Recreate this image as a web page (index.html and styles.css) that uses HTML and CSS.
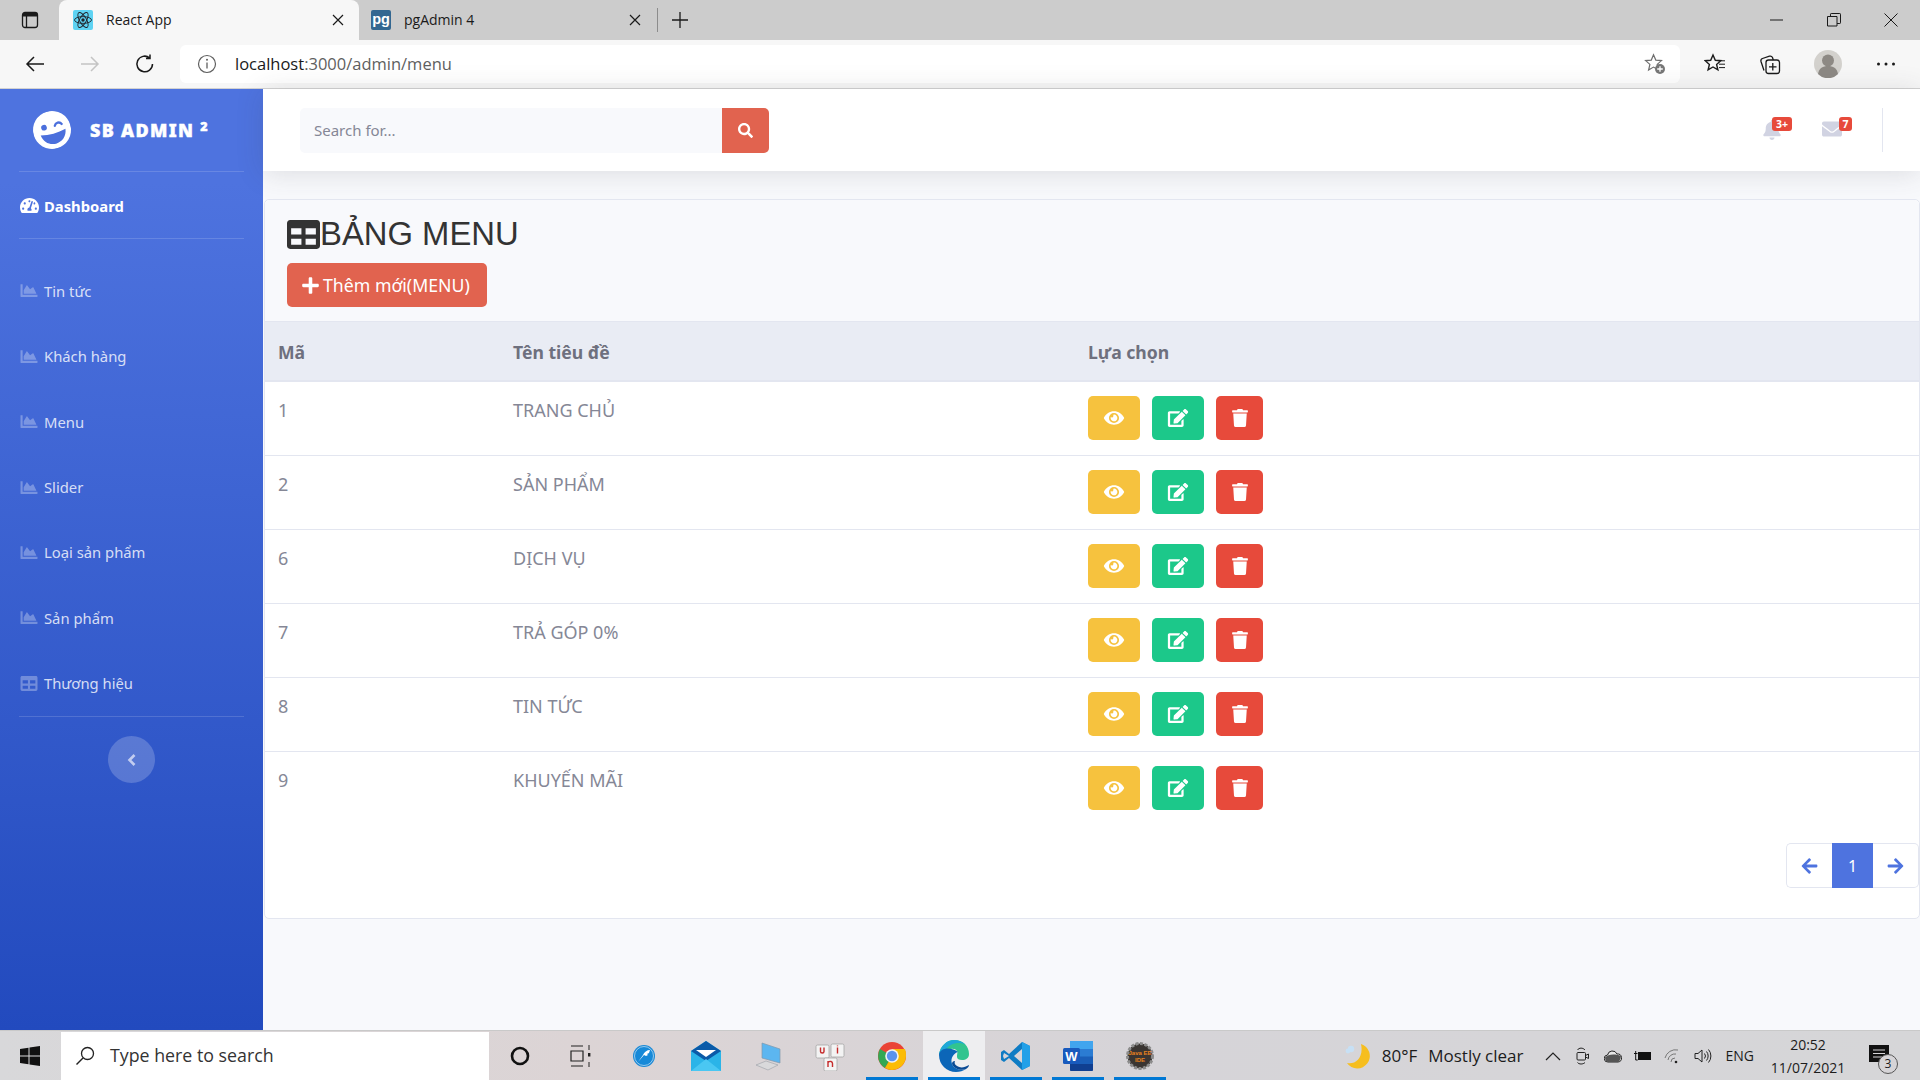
FILE: index.html
```html
<!DOCTYPE html>
<html lang="vi">
<head>
<meta charset="utf-8">
<title>React App</title>
<link rel="stylesheet" href="styles.css">
</head>
<body>
<svg class="sprite" xmlns="http://www.w3.org/2000/svg">
  <symbol id="i-area" viewBox="0 0 512 512"><path d="M500 384c6.6 0 12 5.4 12 12v40c0 6.600-5.400 12-12 12H12c-6.600 0-12-5.400-12-12V76c0-6.600 5.400-12 12-12h40c6.600 0 12 5.400 12 12v308h436zM372.700 159.500L288 216l-85.300-113.700c-5.100-6.800-15.500-6.300-19.900.9L96 248v104h384l-89.900-187.800c-3.200-6.500-11.400-8.700-17.400-4.700z"/></symbol>
  <symbol id="i-table" viewBox="0 0 512 512"><path d="M464 32H48C21.490 32 0 53.490 0 80v352c0 26.510 21.490 48 48 48h416c26.510 0 48-21.490 48-48V80c0-26.510-21.490-48-48-48zM224 416H64v-96h160v96zm0-160H64v-96h160v96zm224 160H288v-96h160v96zm0-160H288v-96h160v96z"/></symbol>
  <symbol id="i-eye" viewBox="0 0 576 512"><path d="M572.520 241.400C518.290 135.590 410.930 64 288 64S57.680 135.640 3.480 241.410a32.350 32.350 0 0 0 0 29.190C57.710 376.410 165.070 448 288 448s230.320-71.640 284.520-177.410a32.350 32.350 0 0 0 0-29.190zM288 400a144 144 0 1 1 144-144 143.930 143.930 0 0 1-144 144zm0-240a95.310 95.310 0 0 0-25.310 3.790 47.850 47.850 0 0 1-66.900 66.900A95.780 95.780 0 1 0 288 160z"/></symbol>
  <symbol id="i-edit" viewBox="0 0 576 512"><path d="M402.600 83.200l90.200 90.200c3.800 3.800 3.800 10 0 13.800L274.400 405.600l-92.800 10.300c-12.400 1.400-22.900-9.100-21.500-21.500l10.300-92.800L388.800 83.200c3.800-3.800 10-3.800 13.800 0zm162-22.900l-48.800-48.800c-15.200-15.200-39.900-15.200-55.200 0l-35.400 35.400c-3.800 3.800-3.800 10 0 13.800l90.200 90.200c3.800 3.800 10 3.800 13.800 0l35.400-35.400c15.200-15.300 15.200-40 0-55.200zM384 346.200V448H64V128h229.800c3.200 0 6.200-1.300 8.500-3.500l40-40c7.600-7.600 2.200-20.500-8.500-20.500H48C21.500 64 0 85.500 0 112v352c0 26.500 21.500 48 48 48h352c26.500 0 48-21.500 48-48V306.200c0-10.700-12.900-16-20.500-8.500l-40 40c-2.200 2.300-3.500 5.300-3.500 8.500z"/></symbol>
  <symbol id="i-trash" viewBox="0 0 448 512"><path d="M432 32H312l-9.400-18.700A24 24 0 0 0 281.100 0H166.800a23.720 23.720 0 0 0-21.400 13.300L136 32H16A16 16 0 0 0 0 48v32a16 16 0 0 0 16 16h416a16 16 0 0 0 16-16V48a16 16 0 0 0-16-16zM53.200 467a48 48 0 0 0 47.900 45h245.800a48 48 0 0 0 47.900-45L416 128H32z"/></symbol>
  <symbol id="i-search" viewBox="0 0 512 512"><path d="M505 442.700L405.300 343c-4.500-4.500-10.600-7-17-7H372c27.600-35.300 44-79.700 44-128C416 93.100 322.900 0 208 0S0 93.100 0 208s93.100 208 208 208c48.300 0 92.700-16.400 128-44v16.300c0 6.400 2.500 12.500 7 17l99.700 99.700c9.400 9.400 24.600 9.400 33.900 0l28.300-28.300c9.400-9.400 9.400-24.600.1-34zM208 336c-70.700 0-128-57.200-128-128 0-70.700 57.200-128 128-128 70.700 0 128 57.200 128 128 0 70.700-57.200 128-128 128z"/></symbol>
  <symbol id="i-plus" viewBox="0 0 448 512"><path d="M416 208H272V64c0-17.670-14.330-32-32-32h-32c-17.670 0-32 14.330-32 32v144H32c-17.670 0-32 14.330-32 32v32c0 17.670 14.330 32 32 32h144v144c0 17.670 14.330 32 32 32h32c17.670 0 32-14.330 32-32V304h144c17.670 0 32-14.330 32-32v-32c0-17.670-14.330-32-32-32z"/></symbol>
  <symbol id="i-left" viewBox="0 0 448 512"><path d="M257.500 445.100l-22.200 22.200c-9.400 9.400-24.600 9.400-33.900 0L7 273c-9.400-9.400-9.400-24.600 0-33.900L201.400 44.700c9.400-9.400 24.600-9.400 33.900 0l22.200 22.200c9.500 9.500 9.300 25-.4 34.300L136.600 216H424c13.300 0 24 10.700 24 24v32c0 13.300-10.700 24-24 24H136.600l120.500 114.800c9.800 9.300 10 24.800.4 34.300z"/></symbol>
  <symbol id="i-right" viewBox="0 0 448 512"><path d="M190.500 66.900l22.200-22.200c9.400-9.400 24.600-9.400 33.900 0L441 239c9.400 9.400 9.400 24.600 0 33.900L246.600 467.300c-9.400 9.400-24.600 9.400-33.900 0l-22.200-22.200c-9.500-9.500-9.300-25 .4-34.300L311.400 296H24c-13.300 0-24-10.700-24-24v-32c0-13.300 10.700-24 24-24h287.400L190.900 101.200c-9.800-9.300-10-24.800-.4-34.300z"/></symbol>
  <symbol id="i-bell" viewBox="0 0 448 512"><path d="M224 512c35.320 0 63.970-28.650 63.970-64H160.030c0 35.350 28.650 64 63.970 64zm215.390-149.710c-19.320-20.760-55.470-51.990-55.470-154.290 0-77.700-54.480-139.900-127.940-155.160V32c0-17.670-14.320-32-31.980-32s-31.980 14.330-31.980 32v20.840C118.560 68.100 64.080 130.300 64.080 208c0 102.300-36.150 133.530-55.470 154.290-6 6.450-8.660 14.160-8.610 21.710.11 16.400 12.980 32 32.100 32h383.800c19.120 0 32-15.600 32.100-32 .05-7.550-2.610-15.270-8.610-21.710z"/></symbol>
  <symbol id="i-mail" viewBox="0 0 512 512"><path d="M502.300 190.800c3.900-3.100 9.700-.2 9.700 4.700V400c0 26.500-21.500 48-48 48H48c-26.500 0-48-21.500-48-48V195.600c0-5 5.700-7.800 9.700-4.700 22.400 17.400 52.100 39.500 154.100 113.600 21.100 15.400 56.700 47.800 92.200 47.600 35.700.3 72-32.800 92.300-47.600 102-74.100 131.600-96.300 154-113.700zM256 320c23.200.4 56.600-29.200 73.400-41.400 132.700-96.300 142.800-104.700 173.400-128.700 5.800-4.500 9.200-11.500 9.200-18.900v-19c0-26.500-21.500-48-48-48H48C21.500 64 0 85.500 0 112v19c0 7.400 3.400 14.300 9.200 18.900 30.600 23.900 40.700 32.400 173.400 128.700 16.800 12.200 50.200 41.800 73.400 41.400z"/></symbol>
  <symbol id="i-gauge" viewBox="0 0 576 512"><path d="M288 32C128.940 32 0 160.940 0 320c0 52.800 14.250 102.260 39.060 144.800 5.610 9.620 16.300 15.200 27.440 15.200h443c11.140 0 21.830-5.580 27.440-15.200C561.750 422.260 576 372.800 576 320c0-159.060-128.940-288-288-288zm0 64c14.710 0 26.580 10.130 30.320 23.650-1.110 2.260-2.640 4.230-3.450 6.670l-9.220 27.670c-5.130 3.490-10.970 6.010-17.640 6.010-17.670 0-32-14.330-32-32S270.330 96 288 96zM96 384c-17.670 0-32-14.330-32-32s14.330-32 32-32 32 14.330 32 32-14.330 32-32 32zm48-160c-17.670 0-32-14.330-32-32s14.330-32 32-32 32 14.330 32 32-14.330 32-32 32zm246.770-72.410l-61.330 184C343.130 347.330 352 364.540 352 384c0 11.720-3.380 22.550-8.880 32H232.880c-5.500-9.450-8.880-20.280-8.880-32 0-33.940 26.500-61.430 59.900-63.590l61.340-184.010c4.170-12.560 17.730-19.450 30.360-15.170 12.570 4.190 19.350 17.790 15.170 30.360zm14.660 57.200l15.520-46.550c3.470-1.290 7.130-2.230 11.050-2.230 17.670 0 32 14.330 32 32s-14.330 32-32 32c-11.380-.01-20.890-6.280-26.570-15.220zM480 384c-17.670 0-32-14.330-32-32s14.330-32 32-32 32 14.330 32 32-14.330 32-32 32z"/></symbol>
</svg>

<div class="tabstrip">
  <div class="tab-actions">
    <svg class="ic20" viewBox="0 0 20 20"><rect x="2.500" y="2.500" width="15" height="15" rx="2.500" fill="none" stroke="#1a1a1a" stroke-width="1.300"/><path d="M3 3h14v3.500H3z" fill="#1a1a1a"/><path d="M6.500 6v11" stroke="#1a1a1a" stroke-width="1.300"/></svg>
  </div>
  <div class="tab tab-active">
    <svg class="favicon" viewBox="0 0 20 20"><rect width="20" height="20" rx="2" fill="#5ed3f3"/><g fill="none" stroke="#20232a" stroke-width=".9"><ellipse cx="10" cy="10" rx="8.500" ry="3.400"/><ellipse cx="10" cy="10" rx="8.500" ry="3.400" transform="rotate(60 10 10)"/><ellipse cx="10" cy="10" rx="8.500" ry="3.400" transform="rotate(120 10 10)"/></g><circle cx="10" cy="10" r="1.700" fill="#20232a"/></svg>
    <span class="tab-title">React App</span>
    <svg class="tab-x" viewBox="0 0 12 12"><path d="M1 1l10 10M11 1L1 11" stroke="#1a1a1a" stroke-width="1.200"/></svg>
  </div>
  <div class="tab tab-bg">
    <svg class="favicon" viewBox="0 0 20 20"><rect width="20" height="20" rx="2" fill="#336791"/><text x="10" y="13.500" class="pg-text">pg</text></svg>
    <span class="tab-title">pgAdmin 4</span>
    <svg class="tab-x" viewBox="0 0 12 12"><path d="M1 1l10 10M11 1L1 11" stroke="#1a1a1a" stroke-width="1.200"/></svg>
  </div>
  <span class="tab-sep"></span>
  <svg class="new-tab" viewBox="0 0 18 18"><path d="M9 1v16M1 9h16" stroke="#1a1a1a" stroke-width="1.300"/></svg>
  <div class="win-controls">
    <svg class="win-btn" viewBox="0 0 14 14"><path d="M0 7h13" stroke="#1a1a1a" stroke-width="1"/></svg>
    <svg class="win-btn" viewBox="0 0 14 14"><path d="M.5 3.500h9.500v9.500H.5zM3.500 3.500V1.200a.7.7 0 0 1 .7-.7h8.600a.7.7 0 0 1 .7.7v8.600a.7.7 0 0 1-.7.7H10" fill="none" stroke="#1a1a1a" stroke-width="1"/></svg>
    <svg class="win-btn" viewBox="0 0 14 14"><path d="M.5.500l13 13M13.500.500l-13 13" stroke="#1a1a1a" stroke-width="1"/></svg>
  </div>
</div>

<div class="toolbar">
  <div class="nav-btns">
    <svg class="ic22" viewBox="0 0 22 22"><path d="M20 11H3M10 4l-7 7 7 7" fill="none" stroke="#1a1a1a" stroke-width="1.500"/></svg>
    <svg class="ic22" viewBox="0 0 22 22"><path d="M2 11h17M12 4l7 7-7 7" fill="none" stroke="#c4c4c4" stroke-width="1.500"/></svg>
    <svg class="ic22" viewBox="0 0 22 22"><path d="M18.500 11a7.800 7.800 0 1 1-3-6.200M16 1.500v4h-4" fill="none" stroke="#1a1a1a" stroke-width="1.500"/></svg>
  </div>
  <div class="addressbar">
    <svg class="info" viewBox="0 0 20 20"><circle cx="10" cy="10" r="8.500" fill="none" stroke="#5f5f5f" stroke-width="1.200"/><path d="M10 8.500v6" stroke="#5f5f5f" stroke-width="1.300"/><circle cx="10" cy="5.800" r="1" fill="#5f5f5f"/></svg>
    <span class="url"><span class="url-host">localhost</span>:3000/admin/menu</span>
    <svg class="star-add" viewBox="0 0 22 22"><path d="M9.500 1.800l2.300 5.300 5.700.5-4.300 3.800 1.200 5.600-4.900-2.900-4.900 2.900 1.300-5.600-4.300-3.800 5.700-.5z" fill="none" stroke="#6f6f6f" stroke-width="1.200"/><circle cx="16" cy="16" r="5" fill="#777"/><path d="M16 13.200v5.600M13.200 16h5.600" stroke="#fff" stroke-width="1.300"/></svg>
  </div>
  <div class="tool-btns">
    <svg class="ic22" viewBox="0 0 22 22"><path d="M9 2l2.300 5.300 5.500.4-4.200 3.700 1.300 5.400L9 14l-4.900 2.800 1.300-5.400-4.200-3.700 5.500-.4z" fill="none" stroke="#1a1a1a" stroke-width="1.400"/><path d="M14.500 7.800H21M15 11.200h6M15 14.600h6" stroke="#1a1a1a" stroke-width="1"/></svg>
    <svg class="ic22" viewBox="0 0 22 22"><rect x="7" y="7" width="13.500" height="13.500" rx="2.500" fill="none" stroke="#1a1a1a" stroke-width="1.300"/><path d="M13.800 10v7.500M10 13.800h7.500" stroke="#1a1a1a" stroke-width="1.300"/><path d="M5 17.500L2 8.500a2.500 2.500 0 0 1 1.500-3l7-2.300a2.500 2.500 0 0 1 3 1.300l.8 2.500" fill="none" stroke="#1a1a1a" stroke-width="1.300"/></svg>
    <svg class="avatar" viewBox="0 0 28 28"><circle cx="14" cy="14" r="14" fill="#d3d1cd"/><circle cx="14" cy="10.500" r="6" fill="#8d8984"/><path d="M4 24c1-6 5-8 10-8s9 2 10 8a14 14 0 0 1-20 0z" fill="#8d8984"/></svg>
    <svg class="ic22" viewBox="0 0 22 22"><circle cx="3.500" cy="11" r="1.500" fill="#1a1a1a"/><circle cx="11" cy="11" r="1.500" fill="#1a1a1a"/><circle cx="18.500" cy="11" r="1.500" fill="#1a1a1a"/></svg>
  </div>
</div>

<div class="app">
  <aside class="sidebar">
    <div class="brand">
      <svg class="brand-logo" viewBox="0 0 40 40">
        <circle cx="20" cy="20" r="20" fill="#fff"/>
        <circle cx="12.500" cy="15.500" r="3" fill="#4b6fdc"/>
        <path d="M24 16.500c1.500-3.200 6-3.200 7.500 0" fill="none" stroke="#4b6fdc" stroke-width="2.400" stroke-linecap="round"/>
        <path d="M7 22.500c9 2.300 18 2.300 27 0-1 8-7 12.500-13.500 12.500S8 30.500 7 22.500z" fill="#4b6fdc"/>
      </svg>
      <span class="brand-text">SB ADMIN <sup class="brand-sup">2</sup></span>
    </div>
    <hr class="side-hr">
    <a class="nav-item nav-active"><svg class="nav-icon"><use href="#i-gauge"/></svg><span>Dashboard</span></a>
    <hr class="side-hr">
    <nav class="nav-list">
      <a class="nav-item"><svg class="nav-icon"><use href="#i-area"/></svg><span>Tin tức</span></a>
      <a class="nav-item"><svg class="nav-icon"><use href="#i-area"/></svg><span>Khách hàng</span></a>
      <a class="nav-item"><svg class="nav-icon"><use href="#i-area"/></svg><span>Menu</span></a>
      <a class="nav-item"><svg class="nav-icon"><use href="#i-area"/></svg><span>Slider</span></a>
      <a class="nav-item"><svg class="nav-icon"><use href="#i-area"/></svg><span>Loại sản phẩm</span></a>
      <a class="nav-item"><svg class="nav-icon"><use href="#i-area"/></svg><span>Sản phẩm</span></a>
      <a class="nav-item"><svg class="nav-icon"><use href="#i-table"/></svg><span>Thương hiệu</span></a>
    </nav>
    <hr class="side-hr">
    <div class="toggle"><svg class="toggle-ic" viewBox="0 0 10 14"><path d="M7.500 2L2.500 7l5 5" fill="none" stroke="#c3cdf0" stroke-width="2.600"/></svg></div>
  </aside>

  <main class="content">
    <header class="topbar">
      <form class="search">
        <span class="search-input">Search for...</span>
        <span class="search-btn"><svg class="search-ic"><use href="#i-search"/></svg></span>
      </form>
      <div class="top-right">
        <div class="alert alert-first"><svg class="alert-bell"><use href="#i-bell"/></svg><span class="badge badge-bell">3+</span></div>
        <div class="alert"><svg class="alert-mail"><use href="#i-mail"/></svg><span class="badge badge-mail">7</span></div>
        <span class="top-divider"></span>
      </div>
    </header>

    <section class="card">
      <div class="card-head">
        <h1 class="card-title"><svg class="title-ic"><use href="#i-table"/></svg>BẢNG MENU</h1>
        <a class="btn-add"><svg class="plus-ic"><use href="#i-plus"/></svg>Thêm mới(MENU)</a>
      </div>
      <table class="table">
        <thead>
          <tr><th class="col-id">Mã</th><th class="col-title">Tên tiêu đề</th><th>Lựa chọn</th></tr>
        </thead>
        <tbody>
          <tr><td>1</td><td>TRANG CHỦ</td><td><div class="actions"><a class="act act-view"><svg class="act-ic-w"><use href="#i-eye"/></svg></a><a class="act act-edit"><svg class="act-ic-w"><use href="#i-edit"/></svg></a><a class="act act-del"><svg class="act-ic"><use href="#i-trash"/></svg></a></div></td></tr>
          <tr><td>2</td><td>SẢN PHẨM</td><td><div class="actions"><a class="act act-view"><svg class="act-ic-w"><use href="#i-eye"/></svg></a><a class="act act-edit"><svg class="act-ic-w"><use href="#i-edit"/></svg></a><a class="act act-del"><svg class="act-ic"><use href="#i-trash"/></svg></a></div></td></tr>
          <tr><td>6</td><td>DỊCH VỤ</td><td><div class="actions"><a class="act act-view"><svg class="act-ic-w"><use href="#i-eye"/></svg></a><a class="act act-edit"><svg class="act-ic-w"><use href="#i-edit"/></svg></a><a class="act act-del"><svg class="act-ic"><use href="#i-trash"/></svg></a></div></td></tr>
          <tr><td>7</td><td>TRẢ GÓP 0%</td><td><div class="actions"><a class="act act-view"><svg class="act-ic-w"><use href="#i-eye"/></svg></a><a class="act act-edit"><svg class="act-ic-w"><use href="#i-edit"/></svg></a><a class="act act-del"><svg class="act-ic"><use href="#i-trash"/></svg></a></div></td></tr>
          <tr><td>8</td><td>TIN TỨC</td><td><div class="actions"><a class="act act-view"><svg class="act-ic-w"><use href="#i-eye"/></svg></a><a class="act act-edit"><svg class="act-ic-w"><use href="#i-edit"/></svg></a><a class="act act-del"><svg class="act-ic"><use href="#i-trash"/></svg></a></div></td></tr>
          <tr class="row-last"><td>9</td><td>KHUYẾN MÃI</td><td><div class="actions"><a class="act act-view"><svg class="act-ic-w"><use href="#i-eye"/></svg></a><a class="act act-edit"><svg class="act-ic-w"><use href="#i-edit"/></svg></a><a class="act act-del"><svg class="act-ic"><use href="#i-trash"/></svg></a></div></td></tr>
        </tbody>
      </table>
      <div class="pager-row">
        <div class="pager">
          <a class="page-arrow page-prev"><svg class="arrow-ic"><use href="#i-left"/></svg></a>
          <a class="page-num">1</a>
          <a class="page-arrow page-next"><svg class="arrow-ic"><use href="#i-right"/></svg></a>
        </div>
      </div>
    </section>
  </main>
</div>

<footer class="taskbar">
  <div class="start"><svg class="win-logo" viewBox="0 0 20 20"><path d="M0 3l8.500-1.200V9.500H0zM9.500 1.600L20 0v9.500H9.500zM0 10.500h8.500v7.700L0 17zM9.500 10.500H20V20L9.500 18.400z" fill="#111"/></svg></div>
  <div class="task-search">
    <svg class="task-search-ic" viewBox="0 0 20 20"><circle cx="12.500" cy="7.500" r="6" fill="none" stroke="#222" stroke-width="1.300"/><path d="M8 12L1.500 18.500" stroke="#222" stroke-width="1.500"/></svg>
    <span>Type here to search</span>
  </div>
  <div class="task-item"><svg class="task-ic" viewBox="0 0 24 24"><circle cx="12" cy="12" r="8" fill="none" stroke="#111" stroke-width="2.600"/></svg></div>
  <div class="task-item"><svg class="task-ic" viewBox="0 0 24 24"><path d="M1 2h12M1 22h12M1 7h12v10H1z" fill="none" stroke="#222" stroke-width="1.200"/><path d="M19 1v5M19 18v5" stroke="#222" stroke-width="1"/><rect x="18" y="9" width="2.400" height="3.500" fill="#222"/></svg></div>
  <div class="task-item"><svg class="task-ic" viewBox="0 0 24 24"><circle cx="12" cy="12" r="11" fill="#1c8ad6"/><circle cx="12" cy="12" r="9.500" fill="#1689d8" stroke="#e8f3fb" stroke-width=".6"/><path d="M6 18l5-7c1-3 4-5 7-5l-1 3-2 1 1 1-2 1-2-1-6 7z" fill="#fff"/></svg></div>
  <div class="task-item"><svg class="task-ic-lg" viewBox="0 0 30 30"><path d="M0 10L15 0l15 10v20H0z" fill="#2bb4e8"/><path d="M0 10L15 0l15 10-15 10z" fill="#0a5aa8"/><path d="M5 9h20l-10 7z" fill="#fff"/><path d="M0 30l15-12 15 12z" fill="#4ac7f2"/></svg></div>
  <div class="task-item"><svg class="task-ic-lg" viewBox="0 0 30 30"><path d="M9 2l18 6v14L9 17z" fill="#5cb6f0" stroke="#7f98ad" stroke-width=".7"/><path d="M3 24l10-4 12 4-10 5z" fill="#d9d9db" stroke="#9ba0a6" stroke-width=".6"/></svg></div>
  <div class="task-item"><svg class="task-ic-lg" viewBox="0 0 30 30"><rect x="1" y="4" width="13" height="13" rx="1.500" fill="#f3f3f3" stroke="#a5a5a5" stroke-width=".8"/><rect x="16" y="3" width="13" height="13" rx="1.500" fill="#f3f3f3" stroke="#a5a5a5" stroke-width=".8"/><rect x="9" y="17" width="13" height="13" rx="1.500" fill="#f3f3f3" stroke="#a5a5a5" stroke-width=".8"/><path d="M5.500 6.500v4c0 2 3.500 2 3.500 0v-4M22.500 6.500v6M22.500 4.500v.8M13 20v6M13 21.500c2-2 4.500-1 4.500 1v3.500" fill="none" stroke="#c52b2b" stroke-width="1.400"/></svg></div>
  <div class="task-item task-open"><svg class="task-ic-lg" viewBox="0 0 30 30"><circle cx="15" cy="15" r="14" fill="#ea4335"/><path d="M15 15L3 8a14 14 0 0 0 5 19z" fill="#34a853"/><path d="M15 15l-7 12a14 14 0 0 0 21-12z" fill="#fbbc05"/><path d="M15 8h13a14 14 0 0 1 1 7H15z" fill="#fbbc05"/><circle cx="15" cy="15" r="6.800" fill="#f1f3f4"/><circle cx="15" cy="15" r="5.200" fill="#5b93ee"/></svg></div>
  <div class="task-item task-open task-active"><svg class="task-ic-xl" viewBox="0 0 32 32"><path d="M1 15C2 6 9 0 16 0c9 0 15 6 15 14 0 4-3 6-7 6-3 0-5-1-5-3 0-4 1-4 0-6-2-3-7-3-11 0-3 1-5 3-7 4z" fill="#31c48f"/><path d="M1 15C2 6 9 0 16 0c5 0 9 2 12 5C22 1 11 3 7 11z" fill="#1fa8d8"/><path d="M1 15c0 10 8 17 17 17 4 0 7-1 10-3-5 2-12 0-14-5-2-6 2-11 6-12-6-5-18-5-19 3z" fill="#0c66b8"/><path d="M14 24c2 5 9 7 14 5 2-1 3-3 3-4-5 3-9 3-12 1-2-1-3-3-2-5-2 0-3 1-3 3z" fill="#0a4a94"/></svg></div>
  <div class="task-item task-open"><svg class="task-ic-lg" viewBox="0 0 30 30"><path d="M21 1l8 4v20l-8 4-13-12-5 4-3-2v-8l3-2 5 4z" fill="#0f7cc4"/><path d="M21 1l8 4v20l-8 4z" fill="#22a0e8"/><path d="M21 8v14l-8-7z" fill="#d7d5d9"/><path d="M3 12l5 3-5 3-1-3z" fill="#d7d5d9"/></svg></div>
  <div class="task-item task-open"><svg class="task-ic-lg" viewBox="0 0 30 30"><rect x="7" y="0" width="23" height="30" rx="1.500" fill="#1a5eb8"/><path d="M7 0h23v8H7z" fill="#41a5ee"/><path d="M7 8h23v7.500H7z" fill="#2b7cd3"/><path d="M7 23h23v5.500a1.500 1.500 0 0 1-1.500 1.500h-20A1.500 1.500 0 0 1 7 28.500z" fill="#103f91"/><rect x="0" y="7" width="17" height="16" rx="1.500" fill="#185abd"/><text x="8.500" y="19.500" class="word-w">W</text></svg></div>
  <div class="task-item task-open"><svg class="task-ic-lg" viewBox="0 0 30 30"><circle cx="15" cy="15" r="12.500" fill="#3a3532" stroke="#8c8c8c" stroke-width="3" stroke-dasharray="3 1.500"/><text x="15" y="14" class="gear-text">Java EE</text><text x="15" y="21" class="gear-text">IDE</text></svg></div>
  <div class="tray">
    <svg class="moon" viewBox="0 0 26 26"><path d="M17 1a12.500 12.500 0 1 1-14 19c8 2 17-5 14-19z" fill="#f6be1f"/><circle cx="7" cy="6" r="3.200" fill="#c7e0f5"/><circle cx="4" cy="8" r="2.400" fill="#c7e0f5"/></svg>
    <span class="tray-temp">80°F</span>
    <span class="tray-weather">Mostly clear</span>
    <svg class="tray-ic tray-chevron" viewBox="0 0 18 18"><path d="M2 13l7-7 7 7" fill="none" stroke="#222" stroke-width="1.200"/></svg>
    <svg class="tray-ic" viewBox="0 0 18 18"><rect x="3" y="5.500" width="8.500" height="7.500" rx="1" fill="none" stroke="#222" stroke-width="1"/><path d="M11.500 8.500l3-1.500v4.500l-3-1.500M3.500 3C5 .5 9 .5 11 3M3.500 15.500c1.500 2 5.500 2 7.500 0" fill="none" stroke="#222" stroke-width="1"/></svg>
    <svg class="tray-ic" viewBox="0 0 18 18"><path d="M4 15a3.500 3.500 0 0 1-.5-7 5 5 0 0 1 9.500-1 4 4 0 0 1 1 8z" fill="#e5e5e5" stroke="#222" stroke-width="1"/><path d="M1 10.500c3-3 9-4 16-1.500-.5 4-2 6-3 6H4C2.500 15 1 13 1 10.500z" fill="#555"/></svg>
    <svg class="tray-ic" viewBox="0 0 18 18"><rect x="4" y="5" width="13" height="8" fill="#111"/><path d="M0 6.500h3.500M1.700 4v5M1.700 9v4h2" stroke="#111" stroke-width="1" fill="none"/></svg>
    <svg class="tray-ic" viewBox="0 0 18 18"><path d="M1 11a11 11 0 0 1 13-8M4 13a7 7 0 0 1 8-6M7 15a4 4 0 0 1 4-4" fill="none" stroke="#777" stroke-width="1"/><circle cx="12" cy="15" r="1.300" fill="#222"/></svg>
    <svg class="tray-ic" viewBox="0 0 18 18"><path d="M1 6.500h3L8 3v12l-4-3.500H1z" fill="none" stroke="#222" stroke-width="1"/><path d="M10.500 6.500a4 4 0 0 1 0 5M12.500 4.500a7 7 0 0 1 0 9M14.500 2.500a10 10 0 0 1 0 13" fill="none" stroke="#222" stroke-width="1"/></svg>
    <span class="tray-lang">ENG</span>
    <div class="clock"><span>20:52</span><span>11/07/2021</span></div>
    <div class="notify">
      <svg class="notify-ic" viewBox="0 0 20 22"><path d="M0 0h20v17H0z" fill="#111"/><path d="M4 5h12M4 8.500h12M4 12h12" stroke="#d6d4d7" stroke-width="1"/></svg>
      <span class="notify-count">3</span>
    </div>
  </div>
</footer>
</body>
</html>
```

FILE: styles.css
```css
* { box-sizing: border-box; }
html, body { margin: 0; padding: 0; height: 100%; }
body {
  display: flex; flex-direction: column; width: 1920px; height: 1080px; overflow: hidden;
  font-family: "Noto Sans", "Noto Sans CJK SC", sans-serif; color: #858796; background: #f8f9fc;
}
.sprite { display: none; }
svg { fill: currentColor; flex: none; display: block; }
a { text-decoration: none; }

/* browser chrome */
.tabstrip { height: 40px; flex: none; background: #cccccc; display: flex; align-items: center; }
.tab-actions { width: 59px; display: flex; justify-content: center; }
.ic20 { width: 20px; height: 20px; }
.tab { width: 300px; height: 40px; display: flex; align-items: center; padding: 0 15px 0 14px; color: #1a1a1a; font-size: 14px; }
.tab-active { background: #f7f7f7; border-radius: 8px 8px 0 0; }
.tab-bg { width: 298px; padding: 0 16px 0 12px; }
.favicon { width: 20px; height: 20px; }
.tab-title { margin: 0 0 2px 13px; flex: 1; font-family: "Open Sans", sans-serif; font-size: 14px; }
.tab-x { width: 12px; height: 12px; }
.pg-text { font: 700 14.500px "Liberation Sans", sans-serif; fill: #fff; text-anchor: middle; }
.tab-sep { width: 1px; height: 24px; background: #8c8c8c; }
.new-tab { width: 18px; height: 18px; margin-left: 13px; }
.win-controls { margin-left: auto; display: flex; gap: 43px; padding-right: 22px; }
.win-btn { width: 14px; height: 14px; }

.toolbar { height: 49px; flex: none; background: #f7f7f7; border-bottom: 1px solid #d2d2d2; display: flex; align-items: center; }
.ic22 { width: 22px; height: 22px; }
.nav-btns { width: 180px; display: flex; gap: 33px; padding-left: 24px; }
.addressbar { width: 1500px; height: 38px; background: #fff; border-radius: 6px; display: flex; align-items: center; padding: 0 14px 0 17px; font-family: "Open Sans", sans-serif; font-size: 16.500px; color: #5f5f5f; }
.info { width: 20px; height: 20px; }
.url { margin: 0 0 2px 18px; flex: 1; }
.url-host { color: #1a1a1a; }
.star-add { width: 22px; height: 22px; }
.tool-btns { flex: 1; display: flex; align-items: center; gap: 33px; padding-left: 24px; }
.avatar { width: 28px; height: 28px; }

/* app */
.app { flex: 1; min-height: 0; display: flex; }
.sidebar { width: 263px; flex: none; background: linear-gradient(180deg, #4e73df 10%, #224abe 100%); color: #fff; display: flex; flex-direction: column; }
.brand { height: 82px; flex: none; display: flex; align-items: center; padding-left: 33px; }
.brand-logo { width: 38px; height: 38px; transform: rotate(-15deg); }
.brand-text { margin-left: 19px; font-family: "Noto Sans", sans-serif; font-weight: 900; font-size: 18px; letter-spacing: 1.300px; white-space: nowrap; -webkit-text-stroke: .4px #fff; }
.brand-sup { font-size: 12.500px; vertical-align: 6px; line-height: 0; }
.side-hr { height: 1px; margin: 0 19px 0 19px; border: 0; flex: none; background: rgba(255,255,255,.15); }
.nav-item { display: flex; align-items: center; height: 65.400px; padding-left: 20px; color: rgba(255,255,255,.8); font-size: 14.800px; }
.nav-item span { margin-left: 6px; }
.nav-active { height: 66px; color: #fff; font-weight: 700; padding-top: 1px; }
.nav-active span { margin-left: 5px; }
.nav-icon { width: 18px; height: 17px; opacity: .3; fill: #fff; }
.nav-active .nav-icon { opacity: 1; width: 19px; }
.nav-list { padding-top: 19.200px; flex: none; }
.toggle { width: 47px; height: 47px; border-radius: 50%; background: rgba(255,255,255,.2); margin: 19.500px auto 0; display: flex; align-items: center; justify-content: center; }
.toggle-ic { width: 10px; height: 14px; fill: none; }

.content { flex: 1; min-width: 0; display: flex; flex-direction: column; }
.topbar { height: 82px; flex: none; background: #fff; box-shadow: 0 .15rem 1.75rem 0 rgba(58,59,69,.15); display: flex; align-items: center; padding-left: 37px; }
.search { display: flex; margin: 0; height: 45px; }
.search-input { width: 422px; background: #f8f9fc; border-radius: 5px 0 0 5px; display: flex; align-items: center; padding-left: 14px; font-size: 15px; color: #858796; }
.search-btn { width: 47px; background: #e1634f; border-radius: 0 5px 5px 0; display: flex; align-items: center; justify-content: center; }
.search-ic { width: 15px; height: 15px; fill: #fff; }
.top-right { margin-left: auto; display: flex; align-items: center; padding-right: 37px; }
.alert { position: relative; width: 20px; height: 20px; margin-right: 30px; color: #d1d3e2; }
.alert-first { margin-right: 39px; }
.alert-bell { width: 18px; height: 20px; fill: #d1d3e2; }
.alert-mail { width: 20px; height: 20px; fill: #d1d3e2; margin-top: -1px; }
.badge { position: absolute; top: -3px; background: #e74a3b; color: #fff; font-size: 10.500px; font-weight: 700; line-height: 14px; height: 14px; border-radius: 3px; text-align: center; }
.badge-bell { left: 9px; width: 20px; }
.badge-mail { left: 17px; width: 13px; }
.top-divider { width: 1px; height: 44px; background: #e3e6f0; margin-left: 10px; }

.card { margin-top: 28px; margin-left: 1px; height: 720px; flex: none; background: #fff; border: 1px solid #e3e6f0; border-radius: 5px; display: flex; flex-direction: column; }
.card-head { height: 122px; flex: none; background: #f8f9fc; border-bottom: 1px solid #e3e6f0; padding: 16px 0 0 22px; border-radius: 5px 5px 0 0; }
.card-title { margin: 0; display: flex; align-items: center; height: 36px; color: #333; font: 400 32.800px "Liberation Sans", Arial, sans-serif; }
.title-ic { width: 33px; height: 33px; fill: #333; }
.btn-add { margin-top: 11px; width: 200px; height: 44px; background: #e1634f; border-radius: 5px; color: #fff; display: flex; align-items: center; padding-left: 15px; font-size: 17.700px; }
.plus-ic { width: 17px; height: 19px; fill: #fff; margin-right: 4px; }

.table { width: 100%; border-collapse: collapse; table-layout: fixed; flex: none; font-size: 18px; color: #858796; }
.col-id { width: 235px; }
.col-title { width: 575px; }
.table th { height: 59px; background: #e9ecf4; border-bottom: 2px solid #e3e6f0; text-align: left; padding: 2px 13px 0; font-weight: 700; font-size: 17.600px; color: #6e707e; }
.table td { height: 74px; padding: 14px 13px; vertical-align: top; border-bottom: 1px solid #e3e6f0; line-height: 28px; }
.row-last td { border-bottom: 0; }
.actions { display: flex; gap: 12px; }
.act { width: 52px; height: 44px; border-radius: 5px; display: flex; align-items: center; justify-content: center; color: #fff; }
.act-view { background: #f6c23e; }
.act-edit { background: #1cc88a; }
.act-del { background: #e74a3b; width: 47px; }
.act-ic-w { width: 22px; height: 18px; fill: #fff; }
.act-ic { width: 16px; height: 18px; fill: #fff; }

.pager-row { display: flex; justify-content: flex-end; margin-top: 18px; }
.pager { display: flex; height: 45px; }
.page-arrow { width: 46px; border: 1px solid #e3e6f0; display: flex; align-items: center; justify-content: center; background: #fff; }
.page-prev { border-radius: 5px 0 0 5px; border-right: 0; }
.page-next { border-radius: 0 5px 5px 0; border-left: 0; }
.arrow-ic { width: 17px; height: 18px; fill: #4e73df; }
.page-num { width: 41px; background: #4e73df; color: #fff; font-size: 16px; display: flex; align-items: center; justify-content: center; }

/* taskbar */
.taskbar { height: 50px; flex: none; background: linear-gradient(90deg, #d8d8da 0%, #dcd4d5 30%, #d6d4d8 60%, #d6d6d8 100%); display: flex; align-items: center; border-top: 1px solid #c9c9c9; color: #1c1c1c; font-family: "Open Sans", sans-serif; }
.start { width: 61px; display: flex; justify-content: center; padding-right: 2px; }
.win-logo { width: 20px; height: 20px; }
.task-search { width: 428px; height: 48px; background: #fff; display: flex; align-items: center; padding-left: 14px; font-size: 17.800px; color: #333; }
.task-search span { margin: 0 0 2px -1px; }
.task-search-ic { width: 20px; height: 20px; margin-right: 16px; }
.task-item { width: 62px; height: 49px; position: relative; display: flex; align-items: center; justify-content: center; }
.task-ic { width: 24px; height: 24px; }
.task-ic-lg { width: 30px; height: 30px; }
.task-ic-xl { width: 32px; height: 32px; }
.task-open::after { content: ""; position: absolute; left: 5px; right: 5px; bottom: 0; height: 3px; background: #0078d4; }
.task-active { background: #eeeef0; }
.word-w { font: 700 13px "Liberation Sans", sans-serif; fill: #fff; text-anchor: middle; }
.gear-text { font: 700 6px "Liberation Sans", sans-serif; fill: #e8831f; text-anchor: middle; }
.tray { margin-left: auto; display: flex; align-items: center; height: 49px; font-size: 17px; }
.moon { width: 26px; height: 26px; margin-right: 12px; }
.tray-temp { margin-right: 11px; }
.tray-weather { margin-right: 20px; }
.tray-ic { width: 18px; height: 18px; margin-right: 12px; }
.tray-lang { font-size: 14px; margin: 0 0 0 2px; }
.clock { width: 108px; display: flex; flex-direction: column; align-items: center; font-size: 14px; line-height: 23px; }
.notify { position: relative; width: 54px; height: 36px; margin-left: 4px; }
.notify-ic { width: 20px; height: 22px; margin: 7px 0 0 3px; }
.notify-count { position: absolute; left: 12px; top: 16px; width: 20px; height: 20px; border: 1px solid #555; border-radius: 50%; background: #d6d4d7; font-size: 12px; line-height: 18px; text-align: center; }
```
